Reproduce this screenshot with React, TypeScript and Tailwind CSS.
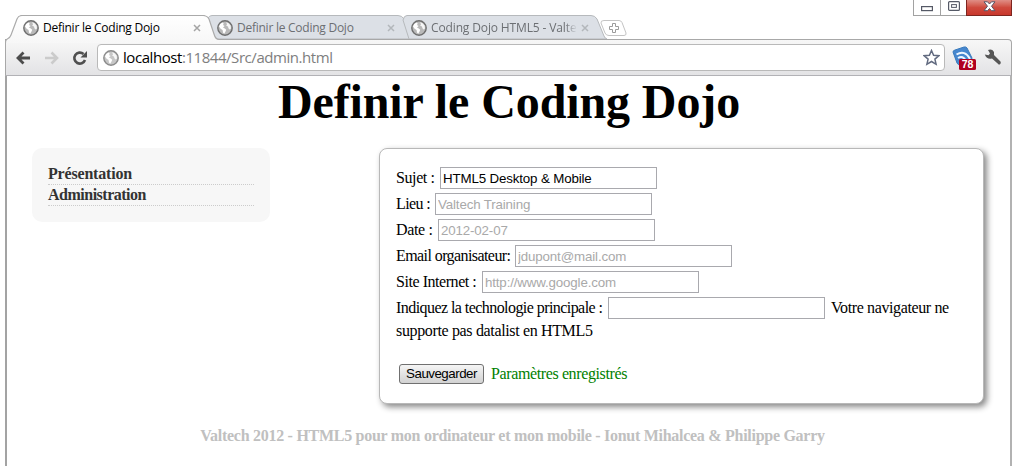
import React from "react";

const serif = "font-['Liberation_Serif','Times_New_Roman',serif]";
const sans = "font-['Liberation_Sans',Arial,sans-serif]";
const ui = "font-['Open_Sans','Noto_Sans',sans-serif]";

function Globe({ className = "" }: { className?: string }) {
  return (
    <svg viewBox="0 0 16 16" className={`h-4 w-4 shrink-0 ${className}`}>
      <circle cx="8" cy="8" r="7.2" fill="#b9b9b9" stroke="#6f6f6f" strokeWidth="1.4" />
      <path d="M2 6.500 3 4.200 5.200 2.600 6.800 3.600 6 5 7.600 6 6 7.400 7.800 8.400 9.200 9.800 8.400 11.800 7.200 13.800 6 12.400 5.600 10 3.600 8.800z" fill="#fff" />
      <path d="M9 2.200 11.600 3.200 13.600 5.600 14 8.600 12.600 9.600 11.400 8.200 11 6.600 9.200 5.800 10 4.200z" fill="#f6f6f6" />
    </svg>
  );
}

function CloseMark({ light }: { light?: boolean }) {
  return (
    <svg viewBox="0 0 8 8" className="h-2 w-2 shrink-0">
      <path d="M1 1 7 7M7 1 1 7" stroke={light ? "#b3b7bb" : "#a5a5a5"} strokeWidth="1.5" />
    </svg>
  );
}

function BackTab({ title, width, path, className, fade }: { title: string; width: number; path: string; className: string; fade?: boolean }) {
  return (
    <div className={`relative mt-[15px] flex h-[24px] shrink-0 ${className}`}>
      <svg className="absolute inset-0" width={width} height="24">
        <path d={path} fill="#dce0e6" stroke="#b6b9bc" />
      </svg>
      <div className="relative flex h-[25px] w-full items-center">
        <Globe />
        <span className={`${ui} ml-1 w-[146px] overflow-hidden text-[12px] whitespace-nowrap text-[#6c6f73] ${fade ? "mask-r-from-[92%] tracking-[-0.13px]" : "tracking-[-0.25px]"}`}>{title}</span>
        <span className="ml-1"><CloseMark light /></span>
      </div>
    </div>
  );
}

function Field({ label, labelClass, value, placeholder, children }: { label: string; labelClass: string; value?: string; placeholder?: string; children?: React.ReactNode }) {
  return (
    <div className="flex h-[26px] items-center whitespace-nowrap">
      <label className={`shrink-0 ${labelClass}`}>{label}</label>
      <input
        defaultValue={value}
        placeholder={placeholder}
        className={`${sans} h-[22px] w-[217px] shrink-0 border border-[#a9a9ae] bg-white px-[2px] text-[13.33px] tracking-[-0.15px] text-black placeholder:text-[#a9a9a9]`}
      />
      {children}
    </div>
  );
}

export default function App() {
  return (
    <div className="relative flex h-[466px] w-[1013px] flex-col overflow-hidden bg-white">
      <header className="relative flex h-[39px] shrink-0">
        <div className="relative z-10 ml-[5px] mt-[15px] flex h-[24px] w-[212px] shrink-0">
          <svg className="absolute top-0 left-0" width="214" height="28">
            <defs>
              <linearGradient id="tab" x1="0" y1="0" x2="0" y2="1">
                <stop offset="0" stopColor="#fff" />
                <stop offset="1" stopColor="#f7f7f7" />
              </linearGradient>
            </defs>
            <path d="M.5 28V26.500Q1 24.500 3 23.500Q5 22.500 6 20L12 4Q13.500.5 17 .5H198Q202 .5 204 4L209 19Q210.500 24.500 214 24.500V28z" fill="url(#tab)" />
            <path d="M.5 28V26.500Q1 24.500 3 23.500Q5 22.500 6 20L12 4Q13.500.5 17 .5H198Q202 .5 204 4L209 19Q210.500 24.500 214 24.500" fill="none" stroke="#aaa" strokeWidth="1.2" />
          </svg>
          <div className="relative ml-[18px] flex h-[25px] items-center">
            <Globe />
            <span className={`${ui} ml-1 w-[146px] text-[12px] tracking-[-0.25px] whitespace-nowrap text-black`}>Definir le Coding Dojo</span>
            <span className="ml-1"><CloseMark /></span>
          </div>
        </div>
        <BackTab title="Definir le Coding Dojo" width={202} className="-ml-[9px] w-[202px] pl-[9px]" path="M0 3Q1.500.5 4 .5H190Q194 .5 196 4L203 24H7z" />
        <BackTab fade title="Coding Dojo HTML5 - Valte" width={205} className="-ml-[8px] w-[205px] pl-[9px]" path="M7 24 1 5Q2 .5 5 .5H189Q193 .5 195 4L202 21Q203 23.500 205 24z" />
        <svg className="-ml-[7px] mt-[20px] shrink-0" width="28" height="16">
          <path d="M4 .5H19Q21 .5 22 2.500L26 13Q26.500 15.500 24 15.500H9Q6 15.500 5 13L1 3Q.5.5 4 .5z" fill="#fff" stroke="#c4c4c4" />
          <path d="M12.500 3.500H15.500V6.500H18.500V9.500H15.500V12.500H12.500V9.500H9.500V6.500H12.500z" fill="#fff" stroke="#9b9b9b" />
        </svg>
        <div className="mr-[1px] ml-auto flex h-4 w-[99px]">
          <div className="flex w-7 justify-center border border-t-0 border-[#a2a2a2] pt-[6px]">
            <svg width="12" height="6"><rect x=".6" y=".6" width="10.800" height="4" fill="#fff" stroke="#555966" strokeWidth="1.200" /></svg>
          </div>
          <div className="flex w-[25px] justify-center border-b border-[#a2a2a2] pt-px">
            <svg width="12" height="10"><rect x=".6" y=".6" width="10.800" height="8.800" rx="1" fill="#fff" stroke="#555966" strokeWidth="1.200" /><rect x="3.600" y="3.600" width="4.800" height="2.800" fill="#fff" stroke="#555966" /></svg>
          </div>
          <div className="flex w-[46px] justify-center border border-t-0 border-[#7d251f] bg-linear-to-b from-[#df8e86] via-[#cf4a3e] to-[#c8372c] pt-px">
            <svg width="13" height="11"><path d="M1 .8H4.500L6.500 3 8.500.8H12L8.500 5.200 12 9.700H8.500L6.500 7.500 4.500 9.700H1L4.500 5.200z" fill="#fff" stroke="#565364" /></svg>
          </div>
        </div>
      </header>

      <div className="ml-[5px] flex h-[37px] w-[1007px] shrink-0 items-center rounded-tr-[4px] border border-b-[#b2b2b6] border-[#a8a8a8] bg-linear-to-b from-[#f7f7f7] to-[#e3e3e5]">
        <svg className="ml-[10px]" width="15" height="14"><path d="M14 7H3M7.500 1.500 2 7 7.500 12.500" fill="none" stroke="#4c4c4c" strokeWidth="2.800" /></svg>
        <svg className="ml-[13px]" width="15" height="14"><path d="M1 7H12M7.500 1.500 13 7 7.500 12.500" fill="none" stroke="#cbcbcb" strokeWidth="2.600" /></svg>
        <svg className="ml-[13px]" width="16" height="16"><path d="M11.500 4A5.500 5.500 0 1 0 13 10" fill="none" stroke="#4f4f4f" strokeWidth="2.600" /><path d="M15 1V7.500H8.500z" fill="#4f4f4f" /></svg>
        <div className="ml-[9px] flex h-[27px] w-[848px] items-center rounded-[4px] border border-[#b9b9b9] bg-white pl-[5px]">
          <Globe className="opacity-80" />
          <span className={`${ui} ml-[4px] text-[15px] tracking-[-0.44px] whitespace-nowrap text-[#7e7e7e]`}><span className="text-black">localhost</span>:11844/Src/admin.html</span>
          <svg className="mr-[4px] ml-auto" width="17" height="17" viewBox="0 0 17 17"><path d="M8.500 1.500 10.600 6.300 15.800 6.700 11.900 10.100 13.100 15.300 8.500 12.500 3.900 15.300 5.100 10.100 1.200 6.700 6.400 6.300z" fill="#fff" stroke="#626b80" strokeWidth="1.500" /></svg>
        </div>
        <svg className="ml-[7px] mt-[2px] shrink-0" width="26" height="26" viewBox="0 0 26 26">
          <path d="M1 6Q1 4.500 3 4L12 1Q14 .5 15 2L20 12 19 16 8 19Q6 19 5 17z" fill="#4687cf" stroke="#397abc" />
          <path d="M4.500 8.500Q13 3.500 18 13M6 12Q11 9 14 15" fill="none" stroke="#eef6ff" strokeWidth="2" />
          <rect x="7" y="13" width="17" height="11" rx="1.500" fill="#b00020" />
          <text x="15.500" y="22.300" textAnchor="middle" fill="#fff" fontFamily="Liberation Sans" fontWeight="bold" fontSize="10.500">78</text>
        </svg>
        <svg className="ml-[6px] shrink-0" width="18" height="17" viewBox="0 0 18 17"><path d="M.8 5.500 4.500 6.200 6 4.500 4 1Q8-.5 10 3L10 6 16.500 12.500Q17.500 15 15 15.800L8 9.500Q3 11 .8 5.500z" fill="#565656" /></svg>
      </div>

      <main className={`${serif} ml-[5px] flex w-[1007px] grow flex-col border-x-2 border-l-[#a3a3a3] border-r-[#b2b2b2] text-[16px] text-black`}>
        <h1 className="mt-[-2px] h-[56px] pl-px text-center text-[48px] leading-[56px] font-bold tracking-[-0.1px] whitespace-nowrap">Definir le Coding Dojo</h1>
        <div className="mt-[18px] flex items-start">
          <nav className="ml-[25px] flex h-[74px] w-[238px] flex-col rounded-[10px] bg-[#f7f7f7] px-4 pt-4 font-bold text-[#333]">
            <a className="h-[21px] border-b border-dotted border-[#ccc] leading-[20px] tracking-[-0.18px]">Présentation</a>
            <a className="h-[21px] border-b border-dotted border-[#ccc] leading-[20px] tracking-[-0.5px]">Administration</a>
          </nav>
          <section className="ml-[109px] h-[256px] w-[605px] rounded-[8px] border border-[#b8b8b8] bg-white pt-4 pl-4 tracking-[-0.35px] shadow-[3px_3px_6px_#888]">
            <Field label="Sujet :" labelClass="w-[44px] tracking-[-0.4px]" value="HTML5 Desktop & Mobile" />
            <Field label="Lieu :" labelClass="w-[39px] tracking-[-0.6px]" placeholder="Valtech Training" />
            <Field label="Date :" labelClass="w-[42px] tracking-[-0.35px]" placeholder="2012-02-07" />
            <Field label="Email organisateur:" labelClass="w-[119px] tracking-[-0.58px]" placeholder="jdupont@mail.com" />
            <Field label="Site Internet :" labelClass="w-[86px] tracking-[-0.45px]" placeholder="http://www.google.com" />
            <Field label="Indiquez la technologie principale :" labelClass="w-[212px] tracking-[-0.56px]">
              <span className="ml-[6px] tracking-[-0.38px]">Votre navigateur ne</span>
            </Field>
            <p className="h-[20px] leading-[20px]">supporte pas datalist en HTML5</p>
            <div className="mt-[21px] flex items-center">
              <button className={`${sans} ml-[3px] h-[20px] w-[85px] rounded-[3px] border border-[#707070] bg-linear-to-b from-[#f5f5f5] to-[#d2d2d2] text-[13.33px] leading-[18px] tracking-[-0.5px]`}>Sauvegarder</button>
              <span className="ml-[7px] tracking-[-0.38px] text-[#008000]">Paramètres enregistrés</span>
            </div>
          </section>
        </div>
        <footer className="mt-[22px] pl-[8px] text-center leading-[20px] font-bold tracking-[-0.28px] whitespace-nowrap text-[#c0c0c0]">Valtech 2012 - HTML5 pour mon ordinateur et mon mobile - Ionut Mihalcea &amp; Philippe Garry</footer>
      </main>
    </div>
  );
}
